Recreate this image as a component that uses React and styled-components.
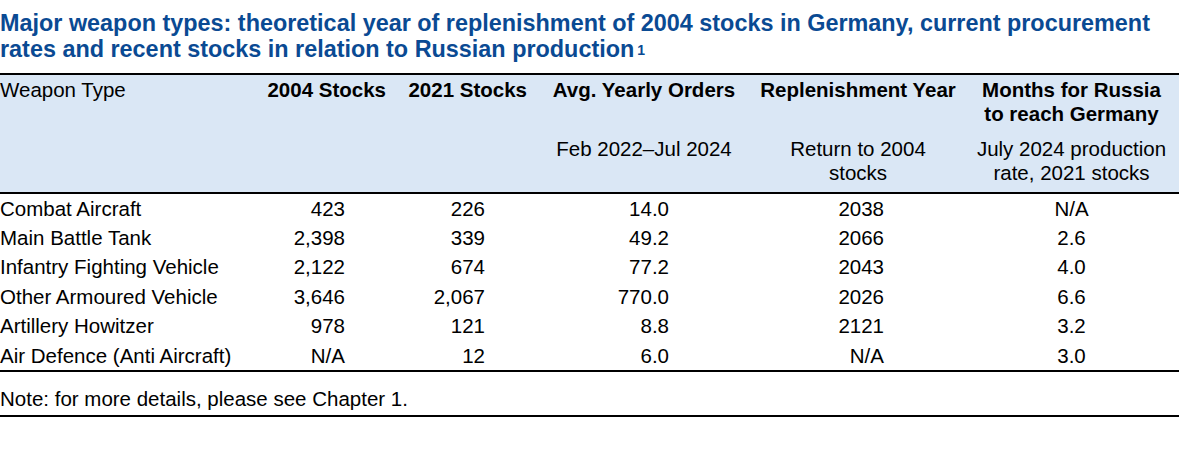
import React from 'react';
import styled, { createGlobalStyle } from 'styled-components';

const GlobalStyle = createGlobalStyle`
  html, body {
    margin: 0;
    padding: 0;
    background: #fff;
  }
  body {
    font-family: "Liberation Sans", Arial, sans-serif;
    color: #000;
  }
`;

const COLS = '255px 140px 145px 208px 220px 211px';

const Page = styled.div`
  width: 1179px;
`;

const Title = styled.h2`
  margin: 0;
  padding-top: 10px;
  max-width: 1170px;
  font-size: 23.4px;
  line-height: 26.3px;
  font-weight: 700;
  color: #0a4a93;
`;

const Sup = styled.span`
  display: inline-block;
  font-size: 14px;
  line-height: 14px;
  vertical-align: 2px;
  margin-left: 3px;
`;

const Table = styled.div`
  margin-top: 10px;
  border-top: 2px solid #000;
  font-size: 20.5px;
`;

const HeadRow = styled.div`
  display: grid;
  grid-template-columns: ${COLS};
  background: #dae7f5;
  padding: 3px 0 7px;
  border-bottom: 2px solid #000;
`;

const HeadCell = styled.div`
  display: flex;
  flex-direction: column;
  gap: 11px;
  text-align: ${p => p.align || 'center'};
  padding-right: ${p => p.pr || 0}px;
  line-height: 24px;
`;

const HeadTitle = styled.div`
  height: 48px;
  font-weight: ${p => (p.plain ? 400 : 700)};
`;

const HeadSub = styled.div`
  height: 48px;
`;

const Body = styled.div`
  border-bottom: 2px solid #000;
`;

const Row = styled.div`
  display: grid;
  grid-template-columns: ${COLS};
  height: 29.4px;
  line-height: 29.4px;
`;

const Cell = styled.div`
  text-align: ${p => p.align || 'right'};
  padding-right: ${p => p.pr || 0}px;
  white-space: nowrap;
`;

const Note = styled.div`
  font-size: 20.5px;
  line-height: 24px;
  padding: 15px 0 4px;
  border-bottom: 2px solid #000;
`;

const headers = [
  { title: 'Weapon Type', plain: true, align: 'left' },
  { title: '2004 Stocks', align: 'right', pr: 9 },
  { title: '2021 Stocks', align: 'right', pr: 13 },
  { title: 'Avg. Yearly Orders', sub: 'Feb 2022–Jul 2024' },
  { title: 'Replenishment Year', sub: <>Return to 2004<br />stocks</> },
  {
    title: <>Months for Russia<br />to reach Germany</>,
    sub: <>July 2024 production<br />rate, 2021 stocks</>,
    pr: 4,
  },
];

const rows = [
  ['Combat Aircraft', '423', '226', '14.0', '2038', 'N/A'],
  ['Main Battle Tank', '2,398', '339', '49.2', '2066', '2.6'],
  ['Infantry Fighting Vehicle', '2,122', '674', '77.2', '2043', '4.0'],
  ['Other Armoured Vehicle', '3,646', '2,067', '770.0', '2026', '6.6'],
  ['Artillery Howitzer', '978', '121', '8.8', '2121', '3.2'],
  ['Air Defence (Anti Aircraft)', 'N/A', '12', '6.0', 'N/A', '3.0'],
];

const cellSpec = [
  { align: 'left', pr: 0 },
  { align: 'right', pr: 50 },
  { align: 'right', pr: 55 },
  { align: 'right', pr: 79 },
  { align: 'right', pr: 84 },
  { align: 'center', pr: 4 },
];

export default function App() {
  return (
    <Page>
      <GlobalStyle />
      <Title>
        Major weapon types: theoretical year of replenishment of 2004 stocks in Germany, current procurement
        rates and recent stocks in relation to Russian production<Sup>1</Sup>
      </Title>
      <Table>
        <HeadRow>
          {headers.map((h, i) => (
            <HeadCell key={i} align={h.align} pr={h.pr}>
              <HeadTitle plain={h.plain}>{h.title}</HeadTitle>
              {h.sub && <HeadSub>{h.sub}</HeadSub>}
            </HeadCell>
          ))}
        </HeadRow>
        <Body>
          {rows.map((r, i) => (
            <Row key={i}>
              {r.map((v, j) => (
                <Cell key={j} align={cellSpec[j].align} pr={cellSpec[j].pr}>{v}</Cell>
              ))}
            </Row>
          ))}
        </Body>
        <Note>Note: for more details, please see Chapter 1.</Note>
      </Table>
    </Page>
  );
}
